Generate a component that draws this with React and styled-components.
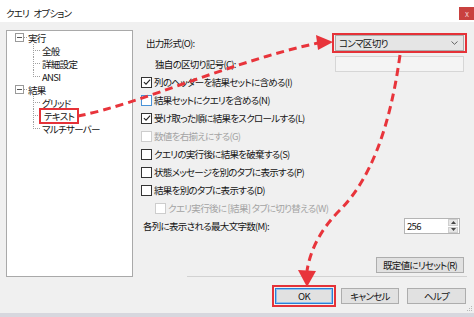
import styled, { createGlobalStyle } from "styled-components";

const GlobalStyle = createGlobalStyle`
  html, body { margin: 0; padding: 0; background: #f0f0f0; }
  #root { width: 474px; height: 317px; overflow: hidden; }
`;

const Dialog = styled.div`
  position: relative;
  width: 474px;
  height: 317px;
  display: flex;
  flex-direction: column;
  background: #f0f0f0;
  font-family: "Noto Sans CJK JP", "Noto Sans", sans-serif;
  font-size: 9.5px;
  letter-spacing: -0.7px;
  font-feature-settings: "palt";
  color: #141414;
  overflow: hidden;
`;

const TitleBar = styled.div`
  flex: none;
  height: 22px;
  background: #fff;
  display: flex;
  align-items: flex-start;
  justify-content: space-between;
  padding-left: 6px;
  font-size: 9.5px;
  letter-spacing: -0.8px;
  word-spacing: 3px;
  span { margin-top: 6px; }
`;

const CloseButton = styled.div`
  width: 15px;
  height: 13px;
  margin-top: 7px;
  background: #c9413f;
  color: #f3d0d0;
  font-size: 8px;
  line-height: 13px;
  text-align: center;
`;

const Main = styled.div`
  flex: none;
  height: 255px;
  box-sizing: border-box;
  padding: 8px 0 0 6px;
  display: flex;
`;

const Tree = styled.div`
  flex: none;
  width: 127px;
  height: 247px;
  box-sizing: border-box;
  background: #fff;
  border: 1px solid #a9a9a9;
  display: flex;
  flex-direction: column;
`;

const TreeRow = styled.div`
  height: 13px;
  display: flex;
  align-items: center;
  padding-left: ${(p) => (p.$child ? 26 : 8)}px;
  white-space: nowrap;
`;

const Expander = styled.span`
  flex: none;
  width: 9px;
  height: 9px;
  box-sizing: border-box;
  border: 1px solid #9a9a9a;
  display: flex;
  align-items: center;
  justify-content: center;
  &::after {
    content: "";
    width: 5px;
    height: 1px;
    background: #555;
  }
`;

const Joiner = styled.span`
  flex: none;
  width: 3px;
  height: 1px;
  background: repeating-linear-gradient(to right, #a0a0a0 0 1px, transparent 1px 2px);
`;

const Connector = styled.span`
  flex: none;
  width: 7px;
  align-self: stretch;
  background:
    repeating-linear-gradient(to bottom, #a0a0a0 0 1px, transparent 1px 2px) 0 0 / 1px ${(p) => (p.$last ? "50%" : "100%")} no-repeat,
    repeating-linear-gradient(to right, #a0a0a0 0 1px, transparent 1px 2px) 0 50% / 100% 1px no-repeat;
`;

const NodeLabel = styled.span`
  margin-left: ${(p) => (p.$child ? 2 : 1)}px;
`;

const Highlight = styled.span`
  height: 16px;
  box-sizing: border-box;
  display: inline-flex;
  align-items: center;
  margin-left: -3px;
  padding: 0 3px;
  border: 2px solid #e53238;
  background: #fff;
`;

const RightPanel = styled.div`
  flex: 1;
  display: flex;
  flex-direction: column;
  padding: 0 10px 0 8px;
`;

const FormatRow = styled.div`
  margin-top: 3px;
  height: 20px;
  display: flex;
  align-items: center;
  justify-content: space-between;
`;

const Label = styled.span`
  padding-left: ${(p) => p.$indent || 0}px;
  color: ${(p) => (p.$disabled ? "#a3a3a3" : "inherit")};
  white-space: nowrap;
`;

const RedFrame = styled.div`
  width: 135px;
  height: 20px;
  box-sizing: border-box;
  border: 2px solid #e53238;
  padding: 0 1px;
  margin-right: -3px;
`;

const Combo = styled.div`
  height: 16px;
  box-sizing: border-box;
  background: #e5e5e5;
  border: 1px solid #acacac;
  display: flex;
  align-items: center;
  justify-content: space-between;
  padding: 0 5px 0 3px;
`;

const DelimRow = styled.div`
  margin-top: 3px;
  height: 16px;
  display: flex;
  align-items: center;
  justify-content: space-between;
`;

const TextBox = styled.div`
  width: 129px;
  height: 16px;
  box-sizing: border-box;
  background: #f4f4f4;
  border: 1px solid #d6d6d6;
`;

const CheckList = styled.div`
  margin-top: 1px;
  display: flex;
  flex-direction: column;
`;

const CheckRow = styled.div`
  height: 18px;
  display: flex;
  align-items: center;
  gap: 2px;
  padding-left: ${(p) => p.$indent || 0}px;
`;

const Box = styled.span`
  flex: none;
  width: 11px;
  height: 11px;
  box-sizing: border-box;
  background: #fff;
  border: 1px solid ${(p) => (p.$disabled ? "#cdcdcd" : p.$focus ? "#4a93d8" : "#333")};
  display: flex;
  align-items: center;
  justify-content: center;
`;

const MaxRow = styled.div`
  height: 18px;
  display: flex;
  align-items: center;
  justify-content: space-between;
`;

const Spin = styled.div`
  width: 56px;
  height: 16px;
  margin-right: 4px;
  box-sizing: border-box;
  background: #fff;
  border: 1px solid #b4b4b4;
  display: flex;
  align-items: center;
  justify-content: space-between;
  padding-left: 2px;
`;

const SpinButtons = styled.div`
  width: 10px;
  height: 14px;
  display: flex;
  flex-direction: column;
  gap: 1px;
  margin-right: 1px;
`;

const SpinHalf = styled.span`
  flex: 1;
  background: #e6e6e6;
  border: 1px solid #cfcfcf;
  box-sizing: border-box;
  display: flex;
  align-items: center;
  justify-content: center;
`;

const ResetRow = styled.div`
  margin-top: 22px;
  display: flex;
  justify-content: flex-end;
`;

const Button = styled.div`
  width: ${(p) => p.$width || 58}px;
  height: 16px;
  box-sizing: border-box;
  background: #e1e1e1;
  border: 1px solid ${(p) => (p.$default ? "#2a7fd4" : "#adadad")};
  box-shadow: ${(p) => (p.$default ? "inset 0 0 0 1px #8ec0ee" : "none")};
  display: flex;
  align-items: center;
  justify-content: center;
  white-space: nowrap;
`;

const Separator = styled.div`
  height: 1px;
  margin: 3px -3px 0 46px;
  background: #d2d2d2;
`;

const Footer = styled.div`
  position: relative;
  flex: none;
  height: 36px;
  box-sizing: border-box;
  padding: 11px 8px 0 0;
  display: flex;
  justify-content: flex-end;
  align-items: flex-start;
  gap: 8px;
`;

const OkFrame = styled.div`
  margin: -3px;
  padding: 1px;
  border: 2px solid #e53238;
`;

const Grip = styled.svg`
  position: absolute;
  right: 1px;
  bottom: 1px;
`;

const BottomStrip = styled.div`
  flex: none;
  height: 4px;
  background: #d7d7de;
`;

const Overlay = styled.svg`
  position: absolute;
  left: 0;
  top: 0;
  pointer-events: none;
`;

const Check = () => (
  <svg width="8" height="8" viewBox="0 0 9 9">
    <path d="M1 4.6 L3.4 7 L8 1.8" fill="none" stroke="#222" strokeWidth="1.2" />
  </svg>
);

const options = [
  { text: "列のヘッダーを結果セットに含める(I)", checked: true },
  { text: "結果セットにクエリを含める(N)", focus: true },
  { text: "受け取った順に結果をスクロールする(L)", checked: true },
  { text: "数値を右揃えにする(G)", disabled: true },
  { text: "クエリの実行後に結果を破棄する(S)" },
  { text: "状態メッセージを別のタブに表示する(P)" },
  { text: "結果を別のタブに表示する(D)" },
  { text: "クエリ実行後に [結果] タブに切り替える(W)", disabled: true, indent: 14 },
];

export default function App() {
  return (
    <>
      <GlobalStyle />
      <Dialog>
        <TitleBar>
          <span>クエリ オプション</span>
          <CloseButton>x</CloseButton>
        </TitleBar>
        <Main>
          <Tree>
            <TreeRow>
              <Expander />
              <Joiner />
              <NodeLabel>実行</NodeLabel>
            </TreeRow>
            <TreeRow $child>
              <Connector />
              <NodeLabel $child>全般</NodeLabel>
            </TreeRow>
            <TreeRow $child>
              <Connector />
              <NodeLabel $child>詳細設定</NodeLabel>
            </TreeRow>
            <TreeRow $child>
              <Connector $last />
              <NodeLabel $child>ANSI</NodeLabel>
            </TreeRow>
            <TreeRow>
              <Expander />
              <Joiner />
              <NodeLabel>結果</NodeLabel>
            </TreeRow>
            <TreeRow $child>
              <Connector />
              <NodeLabel $child>グリッド</NodeLabel>
            </TreeRow>
            <TreeRow $child>
              <Connector />
              <NodeLabel $child>
                <Highlight>テキスト</Highlight>
              </NodeLabel>
            </TreeRow>
            <TreeRow $child>
              <Connector $last />
              <NodeLabel $child>マルチサーバー</NodeLabel>
            </TreeRow>
          </Tree>
          <RightPanel>
            <FormatRow>
              <Label $indent={5}>出力形式(O):</Label>
              <RedFrame>
                <Combo>
                  <span>コンマ区切り</span>
                  <svg width="7" height="4" viewBox="0 0 7 4">
                    <path d="M0.5 0.5 L3.5 3.3 L6.5 0.5" fill="none" stroke="#555" strokeWidth="0.9" />
                  </svg>
                </Combo>
              </RedFrame>
            </FormatRow>
            <DelimRow>
              <Label $indent={14}>独自の区切り記号(C):</Label>
              <TextBox />
            </DelimRow>
            <CheckList>
              {options.map((o) => (
                <CheckRow key={o.text} $indent={o.indent}>
                  <Box $disabled={o.disabled} $focus={o.focus}>
                    {o.checked && <Check />}
                  </Box>
                  <Label $disabled={o.disabled}>{o.text}</Label>
                </CheckRow>
              ))}
            </CheckList>
            <MaxRow>
              <Label $indent={2}>各列に表示される最大文字数(M):</Label>
              <Spin>
                <span>256</span>
                <SpinButtons>
                  <SpinHalf>
                    <svg width="5" height="3" viewBox="0 0 5 3">
                      <path d="M0 3 L2.5 0 L5 3 Z" fill="#444" />
                    </svg>
                  </SpinHalf>
                  <SpinHalf>
                    <svg width="5" height="3" viewBox="0 0 5 3">
                      <path d="M0 0 L2.5 3 L5 0 Z" fill="#444" />
                    </svg>
                  </SpinHalf>
                </SpinButtons>
              </Spin>
            </MaxRow>
            <ResetRow>
              <Button $width={88}>既定値にリセット(R)</Button>
            </ResetRow>
            <Separator />
          </RightPanel>
        </Main>
        <Footer>
          <OkFrame>
            <Button $default>OK</Button>
          </OkFrame>
          <Button>キャンセル</Button>
          <Button $width={59}>ヘルプ</Button>
          <Grip width="7" height="7" viewBox="0 0 7 7">
            <g fill="#b8b8b8">
              <rect x="5" y="1" width="1" height="1" />
              <rect x="3" y="3" width="1" height="1" />
              <rect x="5" y="3" width="1" height="1" />
              <rect x="1" y="5" width="1" height="1" />
              <rect x="3" y="5" width="1" height="1" />
              <rect x="5" y="5" width="1" height="1" />
            </g>
          </Grip>
        </Footer>
        <BottomStrip />
        <Overlay width="474" height="317" viewBox="0 0 474 317">
          <g fill="none" stroke="#e8343b" strokeWidth="3" strokeDasharray="8 5">
            <path d="M78 116 C140 104 230 62 318 43" />
            <path d="M400 55 Q385 165 340 210 Q312 238 307 271" />
          </g>
          <g fill="#e8343b">
            <polygon points="333,42 316,35 318,50" />
            <polygon points="307,287 298,270 316,271" />
          </g>
        </Overlay>
      </Dialog>
    </>
  );
}
